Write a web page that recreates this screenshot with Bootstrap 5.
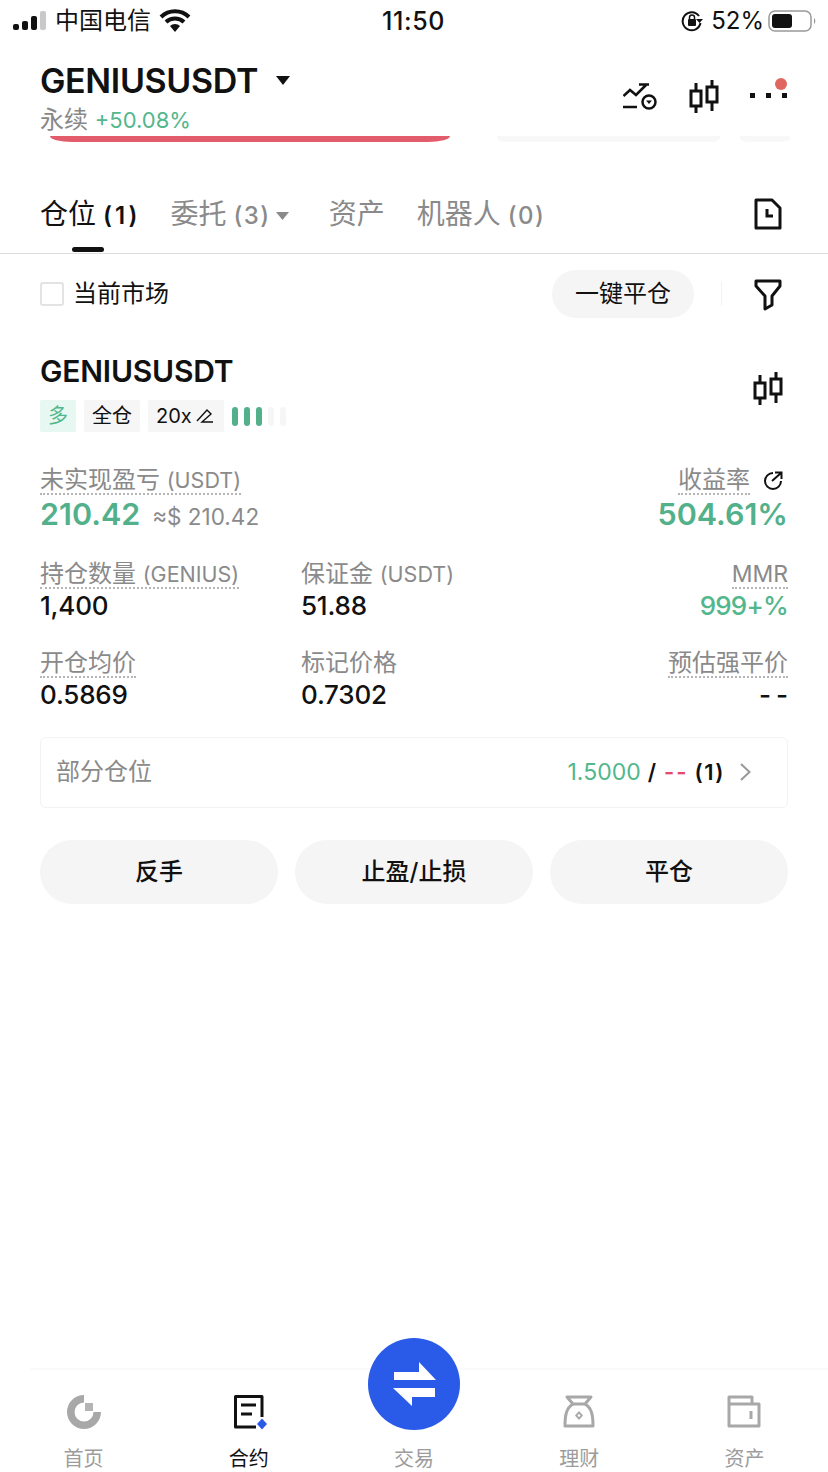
<!DOCTYPE html>
<html>
<head>
    <title>GENIUSUSDT</title>
    <link href="https://cdn.jsdelivr.net/npm/bootstrap@5.3.0/dist/css/bootstrap.min.css" rel="stylesheet">
    <style>
        html, body { margin: 0; background: #fff; }
        body { font-family: Inter, "Noto Sans CJK SC", sans-serif; color: #111; }
        .app-page { width: 828px; height: 1472px; overflow: hidden; position: relative; }
        .status-bar { height: 42px; padding: 0 10px 0 13px; font-size: 24px; line-height: 42px; }
        .status-bar > div { flex: 1 1 0; }
        .status-time { font-size: 25px; font-weight: 500; text-align: center; letter-spacing: .6px; padding-right: 4px; }
        .head-block { padding: 16px 40px 0; height: 94px; }
        .head-title { font-size: 34px; font-weight: 600; line-height: 46px; letter-spacing: -.35px; }
        .head-caret { margin-left: 18px; }
        .head-sub { font-size: 24px; line-height: 32px; color: #888; }
        .head-pct { font-size: 22px; }
        .green-txt { color: #52b78c; }
        .pink-txt { color: #e6476a; letter-spacing: 2px; }
        .peek-row { height: 6px; padding: 0 38px 0 50px; }
        .peek-red { width: 400px; background: #e25c6b; border-radius: 0 0 22px 22px / 0 0 6px 6px; }
        .peek-gray { background: #f8f8f8; border-radius: 0 0 10px 10px / 0 0 4px 4px; }
        .tab-row { height: 112px; padding: 0 46px 0 40px; border-bottom: 1px solid #dedede; position: relative; }
        .tab-item { font-size: 28px; line-height: 40px; color: #8a8a8a; margin-top: 52px; white-space: nowrap; }
        .tab-item.on { color: #111; }
        .tab-num { font-size: 24px; font-weight: 500; letter-spacing: 1.5px; margin-left: 7px; }
        .tab-item.on .tab-num { font-weight: 600; letter-spacing: 3px; }
        .tab-caret { vertical-align: 3px; margin-left: 5px; }
        .tab-mark { position: absolute; left: 72px; bottom: 1px; width: 32px; height: 5px; border-radius: 3px; background: #111; }
        .filter-row { height: 80px; padding: 0 46px 0 40px; font-size: 24px; }
        .check-box { width: 24px; height: 24px; border: 2px solid #e3e3e3; border-radius: 3px; margin-right: 9px; }
        .pill-btn { width: 142px; height: 48px; border-radius: 24px; background: #f5f5f5; border: 0; font-size: 24px; color: #111; padding: 0; }
        .thin-sep { width: 1px; height: 24px; background: #f3f3f3; margin: 0 32px 0 27px; }
        .filter-ic { margin-top: 2px; }
        .pos-block { padding: 0 40px; }
        .pos-title { font-size: 30px; font-weight: 600; line-height: 40px; letter-spacing: -.2px; }
        .tag-item { height: 32px; line-height: 32px; padding: 0 8px; background: #f6f6f6; font-size: 20px; border-radius: 2px; }
        .tag-long { background: #e7f7f1; color: #52b78c; width: 36px; padding: 0; text-align: center; }
        .lev-bar { width: 6px; height: 19px; border-radius: 3px; background: #52b08a; }
        .lev-bar.off { background: #f6f6f6; }
        .lbl { font-size: 24px; line-height: 26px; color: #8a8a8a; border-bottom: 2px dotted #b5b5b5; display: inline-block; white-space: nowrap; }
        .lbl-plain { border-bottom-color: transparent; }
        .lbl-latin { font-size: 21.5px; }
        .lbl-mmr { font-size: 23px; }
        .val { font-size: 26px; line-height: 32px; font-weight: 500; letter-spacing: -.2px; margin-top: 1px; }
        .val.green-txt { letter-spacing: -.8px; }
        .val-dash { letter-spacing: 5px; margin-right: -5px; }
        .stat-row { display: grid; grid-template-columns: 261px 1fr auto; margin-top: 28px; }
        .stat-first { margin-top: 27px; }
        .pnl-big { font-size: 30.5px; font-weight: 600; line-height: 38px; color: #52b08a; }
        .pnl-usd { font-size: 22.5px; color: #8a8a8a; margin-left: 12px; }
        .part-card { height: 71px; border: 1px solid #f2f2f2; border-radius: 6px; padding: 0 36px 0 15px; margin-top: 26px; }
        .part-name { font-size: 24px; color: #8a8a8a; }
        .part-val { font-size: 22px; font-weight: 600; }
        .part-val .green-txt { font-weight: 400; font-size: 23px; margin-right: 7px; }
        .part-val .pink-txt { margin: 0 6px 0 8px; }
        .part-count { letter-spacing: 1.5px; }
        .act-btn { flex: 1 1 0; height: 64px; border-radius: 32px; background: #f5f5f5; border: 0; font-size: 24px; font-weight: 500; color: #111; padding: 0; }
        .tab-bar { position: absolute; left: 0; right: 0; bottom: 0; height: 104px; padding: 0 1px; }
        .tab-line { position: absolute; left: 30px; right: 0; top: 0; height: 2px; background: #fafafa; }
        .tab-cell { flex: 1 1 0; text-align: center; font-size: 20px; color: #9c9c9c; padding-top: 27px; line-height: 28px; }
        .tab-cell.on { color: #111; }
        .tab-icon { height: 36px; margin-bottom: 14px; display: flex; justify-content: center; }
        .fab-circle { position: absolute; left: 368px; top: 1338px; width: 92px; height: 92px; border-radius: 50%; background: #2a5be8; display: flex; align-items: center; justify-content: center; }
    </style>
</head>
<body>
<div class="app-page d-flex flex-column">
    <!-- status bar -->
    <div class="status-bar d-flex align-items-center">
        <div class="d-flex align-items-center">
            <svg width="34" height="20" viewBox="0 0 34 20"><rect x="0" y="13" width="6" height="6" rx="2" fill="#111"/><rect x="9" y="10" width="6" height="9" rx="2" fill="#111"/><rect x="18" y="5" width="6" height="14" rx="2" fill="#111"/><rect x="27" y="0" width="6" height="19" rx="2" fill="#c9c9c9"/></svg>
            <span class="ms-2">中国电信</span>
            <svg class="ms-2" width="32" height="24" viewBox="0 0 32 24"><path d="M2 8 A20 20 0 0 1 30 8 M7 13 A13 13 0 0 1 25 13" fill="none" stroke="#111" stroke-width="4"/><path d="M11 17 A7 7 0 0 1 21 17 L16 23 Z" fill="#111"/></svg>
        </div>
        <div class="status-time">11:50</div>
        <div class="d-flex align-items-center justify-content-end">
            <svg width="22" height="22" viewBox="0 0 22 22"><path d="M18 6 A9 9 0 1 0 19.5 13" fill="none" stroke="#111" stroke-width="2"/><path d="M15 9 L22 9 L18.500 13 Z" fill="#111"/><rect x="7" y="9" width="8" height="7" rx="1" fill="#111"/><path d="M8.500 9 V7.500 A2.500 2.500 0 0 1 13.500 7.500 V9" fill="none" stroke="#111" stroke-width="1.500"/></svg>
            <span class="ms-2">52%</span>
            <svg class="ms-1" width="50" height="24" viewBox="0 0 50 24"><rect x="1" y="2" width="42" height="20" rx="6" fill="none" stroke="#999" stroke-width="1.500"/><rect x="4" y="5" width="20" height="14" rx="3" fill="#111"/><path d="M46 9 A4 4 0 0 1 46 15 Z" fill="#999"/></svg>
        </div>
    </div>

    <!-- symbol header -->
    <div class="head-block d-flex justify-content-between">
        <div>
            <div class="head-title d-flex align-items-center">GENIUSUSDT
                <svg class="head-caret" width="14" height="10" viewBox="0 0 14 10"><path d="M0 0 H14 L7 9 Z" fill="#111"/></svg>
            </div>
            <div class="head-sub">永续 <span class="green-txt head-pct">+50.08%</span></div>
        </div>
        <div class="d-flex align-items-start">
            <svg style="margin-top:25px;margin-right:32px" width="34" height="28" viewBox="0 0 34 28"><path d="M0.500 13 L7 7 L13 12 L23 2 M16 1.500 H26" fill="none" stroke="#111" stroke-width="2.500"/><path d="M0 24 H14" fill="none" stroke="#111" stroke-width="2.500"/><circle cx="26" cy="19" r="6.500" fill="#fff" stroke="#111" stroke-width="2.500"/><path d="M23 17.500 H29 L26 21 Z" fill="#111"/></svg>
            <svg style="margin-top:22px;margin-right:31px" width="30" height="34" viewBox="0 0 30 34"><path d="M7 3 V33 M23 0 V31" stroke="#111" stroke-width="3" fill="none"/><rect x="2" y="11" width="10" height="15" fill="#fff" stroke="#111" stroke-width="3"/><rect x="18" y="7" width="10" height="15" fill="#fff" stroke="#111" stroke-width="3"/></svg>
            <svg style="margin-top:20px" width="38" height="24" viewBox="0 0 38 24"><rect x="0" y="15" width="5" height="5" fill="#111"/><rect x="16" y="15" width="5" height="5" fill="#111"/><rect x="32" y="15" width="5" height="5" fill="#111"/><circle cx="31" cy="6" r="6" fill="#e0675f"/></svg>
        </div>
    </div>

    <div class="peek-row d-flex justify-content-between">
        <div class="peek-red"></div>
        <div class="peek-gray ms-auto" style="width:223px"></div>
        <div class="peek-gray" style="width:50px;margin-left:20px"></div>
    </div>

    <!-- tabs -->
    <div class="tab-row d-flex">
        <div class="tab-item on" style="margin-right:30px">仓位<span class="tab-num">(1)</span></div>
        <div class="tab-item" style="margin-right:40px">委托<span class="tab-num">(3)</span><svg class="tab-caret" width="13" height="9" viewBox="0 0 13 9"><path d="M0 0 H13 L6.500 8 Z" fill="#8a8a8a"/></svg></div>
        <div class="tab-item" style="margin-right:32px">资产</div>
        <div class="tab-item">机器人<span class="tab-num">(0)</span></div>
        <svg class="ms-auto" style="margin-top:56px" width="28" height="32" viewBox="0 0 28 32"><path d="M2 2 H18 L26 10 V30 H2 Z" fill="none" stroke="#111" stroke-width="3" stroke-linejoin="round"/><path d="M13 11 V18 H19" fill="none" stroke="#111" stroke-width="3"/></svg>
        <div class="tab-mark"></div>
    </div>

    <!-- filter -->
    <div class="filter-row d-flex align-items-center">
        <div class="check-box"></div>
        <div>当前市场</div>
        <button class="pill-btn ms-auto" type="button">一键平仓</button>
        <div class="thin-sep"></div>
        <svg class="filter-ic" width="28" height="32" viewBox="0 0 28 32"><path d="M2 2 H26 V7 L18 17 V26 L11 30 V17 L2 7 Z" fill="none" stroke="#111" stroke-width="3" stroke-linejoin="round"/></svg>
    </div>

    <!-- position -->
    <div class="pos-block">
        <div class="d-flex justify-content-between" style="margin-top:17px">
            <div class="pos-title">GENIUSUSDT</div>
            <svg style="margin:21px 5px 0 0" width="30" height="34" viewBox="0 0 30 34"><path d="M7 3 V33 M23 0 V31" stroke="#111" stroke-width="3" fill="none"/><rect x="2" y="11" width="10" height="15" fill="#fff" stroke="#111" stroke-width="3"/><rect x="18" y="7" width="10" height="15" fill="#fff" stroke="#111" stroke-width="3"/></svg>
        </div>
        <div class="d-flex align-items-center" style="margin-top:-6px;gap:8px">
            <div class="tag-item tag-long">多</div>
            <div class="tag-item">全仓</div>
            <div class="tag-item d-flex align-items-center">20x
                <svg class="ms-1" width="18" height="18" viewBox="0 0 18 18" style="margin-right:2px"><path d="M1 14 L11 3 L15 7 L6 15 H17" fill="none" stroke="#111" stroke-width="1.400"/></svg>
            </div>
            <div class="d-flex" style="gap:6px">
                <div class="lev-bar"></div><div class="lev-bar"></div><div class="lev-bar"></div><div class="lev-bar off"></div><div class="lev-bar off"></div>
            </div>
        </div>

        <div class="d-flex justify-content-between" style="margin-top:35px">
            <div>
                <div class="lbl">未实现盈亏 <span class="lbl-latin">(USDT)</span></div>
                <div class="d-flex align-items-baseline"><span class="pnl-big">210.42</span><span class="pnl-usd">≈$ 210.42</span></div>
            </div>
            <div class="text-end">
                <div class="d-flex align-items-center justify-content-end">
                    <div class="lbl">收益率</div>
                    <svg style="margin:0 5px 0 13px" width="20" height="20" viewBox="0 0 20 20"><path d="M10 2 A8 8 0 1 0 18 10" fill="none" stroke="#111" stroke-width="2"/><path d="M9 10 L18 2 M12 1.500 H18.500 V8" fill="none" stroke="#111" stroke-width="2"/></svg>
                </div>
                <div class="pnl-big">504.61%</div>
            </div>
        </div>

        <div class="stat-row stat-first">
            <div><div class="lbl">持仓数量 <span class="lbl-latin">(GENIUS)</span></div><div class="val">1,400</div></div>
            <div><div class="lbl lbl-plain">保证金 <span class="lbl-latin">(USDT)</span></div><div class="val">51.88</div></div>
            <div class="text-end"><div class="lbl"><span class="lbl-mmr">MMR</span></div><div class="val green-txt">999+%</div></div>
        </div>
        <div class="stat-row">
            <div><div class="lbl">开仓均价</div><div class="val">0.5869</div></div>
            <div><div class="lbl lbl-plain">标记价格</div><div class="val">0.7302</div></div>
            <div class="text-end"><div class="lbl">预估强平价</div><div class="val val-dash">--</div></div>
        </div>

        <div class="part-card d-flex align-items-center justify-content-between">
            <div class="part-name">部分仓位</div>
            <div class="d-flex align-items-center part-val"><span class="green-txt">1.5000</span><span>/</span><span class="pink-txt">--</span><span class="part-count">(1)</span><svg style="margin-left:15px" width="11" height="18" viewBox="0 0 11 18"><path d="M1 1 L9.500 9 L1 17" fill="none" stroke="#999" stroke-width="2"/></svg></div>
        </div>

        <div class="d-flex" style="gap:17px;margin-top:32px">
            <button class="act-btn" type="button">反手</button>
            <button class="act-btn" type="button">止盈/止损</button>
            <button class="act-btn" type="button">平仓</button>
        </div>
    </div>

    <!-- bottom tabs -->
    <div class="tab-bar d-flex">
        <div class="tab-line"></div>
        <div class="tab-cell">
            <div class="tab-icon"><svg width="36" height="36" viewBox="0 0 36 36"><path d="M18 0 A17 17 0 1 0 35 17 H27.500 A9.500 9.500 0 1 1 18 7.500 Z" fill="#a8a8a8"/><rect x="19" y="8" width="8" height="8" fill="#b4b4b4"/></svg></div>首页
        </div>
        <div class="tab-cell on">
            <div class="tab-icon"><svg width="36" height="36" viewBox="0 0 36 36"><path d="M25 32 H4.500 V1.500 H31 V22" fill="none" stroke="#111" stroke-width="3" stroke-linejoin="round"/><path d="M10 10 H25 M10 19 H21" stroke="#111" stroke-width="3"/><path d="M31 23.500 L36 29 L31 34.500 L26 29 Z" fill="#2a5be8"/></svg></div>合约
        </div>
        <div class="tab-cell" style="padding-top:77px">交易</div>
        <div class="tab-cell">
            <div class="tab-icon"><svg width="32" height="34" viewBox="0 0 32 34"><path d="M4 2 H28 L22 9 H10 Z" fill="none" stroke="#a8a8a8" stroke-width="3" stroke-linejoin="round"/><path d="M10 9 C3 13 2 21 2 31 H30 C30 21 29 13 22 9" fill="none" stroke="#a8a8a8" stroke-width="3" stroke-linejoin="round"/><path d="M16 16 L20 20.500 L16 25 L12 20.500 Z" fill="#a8a8a8"/><circle cx="16" cy="20.500" r="1.300" fill="#fff"/></svg></div>理财
        </div>
        <div class="tab-cell">
            <div class="tab-icon"><svg width="34" height="34" viewBox="0 0 34 34"><path d="M2 2 H25 V9 H32 V31 H2 Z M2 9 H25" fill="none" stroke="#a8a8a8" stroke-width="3" stroke-linejoin="round"/><path d="M24 16 V24" stroke="#a8a8a8" stroke-width="3"/></svg></div>资产
        </div>
    </div>
    <div class="fab-circle">
        <svg width="44" height="46" viewBox="0 0 44 46"><path d="M2 11 H27 V1 L44 19 H2 Z" fill="#fff"/><path d="M1 27 H43 V36 H20 V45 Z" fill="#fff"/></svg>
    </div>
</div>
</body>
</html>
